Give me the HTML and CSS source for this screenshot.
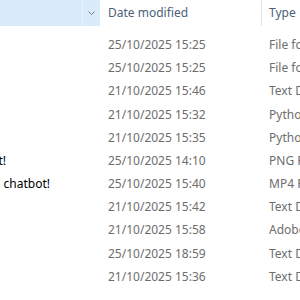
FILE: index.html
```html
<!DOCTYPE html>
<html>
<head>
<meta charset="utf-8">
<link rel="stylesheet" href="styles.css">
</head>
<body>
<div class="view">
  <div class="table">
    <div class="cell head name-head">
      <span class="label">Name</span>
      <span class="drop"><svg width="9" height="6" viewBox="0 0 9 6"><path d="M1.5 1.5 L4.5 4.5 L7.5 1.5" fill="none" stroke="#6b7a8c" stroke-width="1"/></svg></span>
    </div>
    <div class="cell head date-head">Date modified</div>
    <div class="cell head type-head">Type</div>

    <div class="cell name">assets</div><div class="cell date">25/10/2025 15:25</div><div class="cell type">File folder</div>
    <div class="cell name">screenshots</div><div class="cell date">25/10/2025 15:25</div><div class="cell type">File folder</div>
    <div class="cell name">notes.txt</div><div class="cell date">21/10/2025 15:46</div><div class="cell type">Text Document</div>
    <div class="cell name">bot.py</div><div class="cell date">21/10/2025 15:32</div><div class="cell type">Python File</div>
    <div class="cell name">main.py</div><div class="cell date">21/10/2025 15:35</div><div class="cell type">Python File</div>
    <div class="cell name long a">Meet our new chatbot!</div><div class="cell date">25/10/2025 14:10</div><div class="cell type">PNG File</div>
    <div class="cell name long b">Meet our new talking chatbot!</div><div class="cell date">25/10/2025 15:40</div><div class="cell type">MP4 File</div>
    <div class="cell name">readme.txt</div><div class="cell date">21/10/2025 15:42</div><div class="cell type">Text Document</div>
    <div class="cell name">guide.pdf</div><div class="cell date">21/10/2025 15:58</div><div class="cell type">Adobe Acrobat Document</div>
    <div class="cell name">log.txt</div><div class="cell date">25/10/2025 18:59</div><div class="cell type">Text Document</div>
    <div class="cell name">todo.txt</div><div class="cell date">21/10/2025 15:36</div><div class="cell type">Text Document</div>
  </div>
</div>
</body>
</html>
```
FILE: styles.css
```css
html, body {
  margin: 0;
  padding: 0;
  background: #ffffff;
  overflow: hidden;
}
.view {
  width: 300px;
  height: 300px;
  overflow: hidden;
  font-family: "Noto Sans", sans-serif;
  font-size: 12px;
}
.table {
  display: grid;
  grid-template-columns: 250px 161px 220px;
  grid-template-rows: 33.4px;
  grid-auto-rows: 23.2px;
  margin-left: -150px;
  white-space: nowrap;
}
.cell {
  display: flex;
  align-items: center;
  overflow: hidden;
  line-height: 16px;
}
.head {
  align-self: start;
  height: 26px;
  color: #4c607a;
}
.name-head {
  background: #d9ebf9;
  justify-content: space-between;
  padding-left: 6px;
}
.drop {
  width: 17px;
  height: 26px;
  border-left: 1px solid #e6f1fb;
  display: flex;
  align-items: center;
  justify-content: center;
}
.date-head {
  padding-left: 8px;
}
.type-head {
  padding-left: 7px;
  border-left: 1px solid #e5e5e5;
}
.name {
  padding-left: 6px;
  color: #000000;
}
.long {
  justify-content: flex-end;
}
.long.a {
  padding-right: 94px;
}
.long.b {
  padding-right: 50px;
}
.date {
  padding-left: 8px;
  color: #6d6d6d;
}
.type {
  padding-left: 8px;
  color: #6d6d6d;
}
```
